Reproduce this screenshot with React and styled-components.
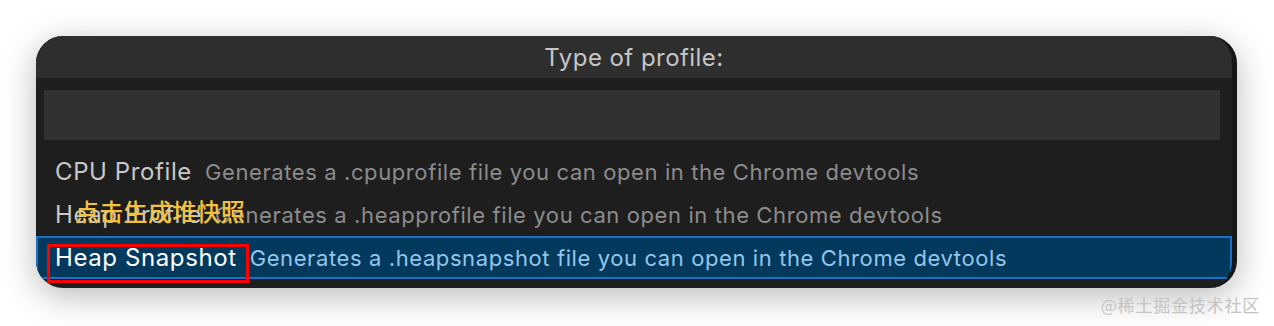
import React from "react";
import styled, { createGlobalStyle } from "styled-components";

const GlobalStyle = createGlobalStyle`
  html, body {
    margin: 0;
    padding: 0;
    background: #ffffff;
  }
  body {
    font-family: Inter, "Noto Sans", sans-serif;
  }
`;

const Page = styled.div`
  width: 1274px;
  height: 326px;
  padding: 36px 0 0 36px;
  box-sizing: border-box;
  display: flex;
  flex-direction: column;
  overflow: hidden;
`;

const Window = styled.div`
  width: 1201px;
  height: 252px;
  box-sizing: border-box;
  border-right: 5px solid #161616;
  border-radius: 27px;
  background: #1e1e1e;
  box-shadow: 0 8px 34px rgba(0, 0, 0, 0.28);
  overflow: hidden;
  display: flex;
  flex-direction: column;
`;

const TitleBar = styled.div`
  height: 42px;
  background: #2e2e2e;
  display: flex;
  align-items: center;
  justify-content: center;
  color: #c6c6c6;
  font-size: 24px;
  letter-spacing: 0.45px;
`;

const Body = styled.div`
  padding: 12px 12px 9px 8px;
  display: flex;
  flex-direction: column;
`;

const Input = styled.div`
  height: 50px;
  background: #313131;
`;

const List = styled.div`
  margin: 10px -12px 0 -8px;
  display: flex;
  flex-direction: column;
`;

const Row = styled.div`
  position: relative;
  height: 43px;
  box-sizing: border-box;
  display: flex;
  align-items: center;
  gap: 13px;
  padding-left: ${(p) => (p.$selected ? "17px" : "19px")};
  background: ${(p) => (p.$selected ? "#04395e" : "transparent")};
  border: ${(p) => (p.$selected ? "2px solid #1b6fc8" : "none")};
  white-space: nowrap;
`;

const Label = styled.span`
  color: ${(p) => (p.$selected ? "#ffffff" : "#c8c8c8")};
  font-size: 24px;
  letter-spacing: 0.6px;
`;

const Description = styled.span`
  color: ${(p) => (p.$selected ? "#93c6ea" : "#8c8c8c")};
  font-size: 22px;
  letter-spacing: 0.6px;
`;

const Highlight = styled.div`
  position: absolute;
  left: 9px;
  top: 6px;
  width: 202px;
  height: 39px;
  box-sizing: border-box;
  border: 3px solid #ff0000;
  pointer-events: none;
`;

const Note = styled.div`
  position: absolute;
  left: 39px;
  top: 0;
  color: #f3c23c;
  font-family: "Noto Sans CJK SC", sans-serif;
  font-size: 24px;
  font-weight: 500;
  letter-spacing: 0.3px;
`;

const Footer = styled.div`
  display: flex;
  justify-content: flex-end;
  padding: 4px 14px 0 0;
`;

const Watermark = styled.span`
  color: #c4c4c4;
  font-family: "Noto Sans CJK SC", sans-serif;
  font-size: 17px;
  letter-spacing: 0.8px;
`;

const items = [
  {
    label: "CPU Profile",
    description: "Generates a .cpuprofile file you can open in the Chrome devtools",
  },
  {
    label: "Heap Profile",
    description: "Generates a .heapprofile file you can open in the Chrome devtools",
    note: "点击生成堆快照",
  },
  {
    label: "Heap Snapshot",
    description: "Generates a .heapsnapshot file you can open in the Chrome devtools",
    selected: true,
  },
];

function App() {
  return (
    <>
      <GlobalStyle />
      <Page>
        <Window>
          <TitleBar>Type of profile:</TitleBar>
          <Body>
            <Input />
            <List>
              {items.map((item) => (
                <Row key={item.label} $selected={item.selected}>
                  <Label $selected={item.selected}>{item.label}</Label>
                  <Description $selected={item.selected}>{item.description}</Description>
                  {item.note && <Note>{item.note}</Note>}
                  {item.selected && <Highlight />}
                </Row>
              ))}
            </List>
          </Body>
        </Window>
        <Footer>
          <Watermark>@稀土掘金技术社区</Watermark>
        </Footer>
      </Page>
    </>
  );
}

export default App;
